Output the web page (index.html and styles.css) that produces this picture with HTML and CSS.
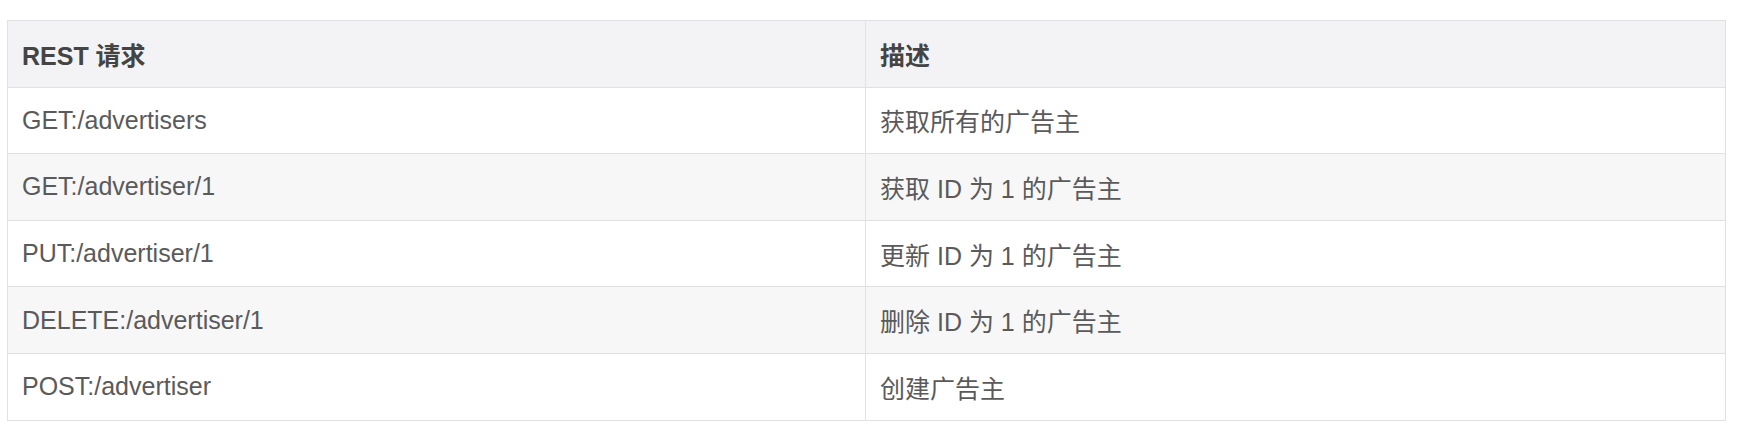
FILE: index.html
```html
<!DOCTYPE html>
<html lang="zh-CN">
<head>
    <meta charset="UTF-8">
    <meta name="viewport" content="width=device-width, initial-scale=1.0">
    <title>REST 请求</title>
    <link rel="stylesheet" href="styles.css">
</head>
<body>

<table class="rest-table">
    <thead>
        <tr>
            <th class="col-req">REST 请求</th>
            <th>描述</th>
        </tr>
    </thead>
    <tbody>
        <tr>
            <td>GET:/advertisers</td>
            <td>获取所有的广告主</td>
        </tr>
        <tr>
            <td>GET:/advertiser/1</td>
            <td>获取 ID 为 1 的广告主</td>
        </tr>
        <tr>
            <td>PUT:/advertiser/1</td>
            <td>更新 ID 为 1 的广告主</td>
        </tr>
        <tr>
            <td>DELETE:/advertiser/1</td>
            <td>删除 ID 为 1 的广告主</td>
        </tr>
        <tr>
            <td>POST:/advertiser</td>
            <td>创建广告主</td>
        </tr>
    </tbody>
</table>

</body>
</html>
```

FILE: styles.css
```css
html, body {
    margin: 0;
    padding: 0;
}
body {
    font-family: "Liberation Sans", "Noto Sans CJK SC", sans-serif;
    background-color: #fff;
    padding: 20px 18px 0 7px;
}
.rest-table {
    width: 1719px;
    border-collapse: collapse;
    border: 1px solid #e0e0e0;
    font-size: 25px;
    color: #5a5a5a;
}
.rest-table th,
.rest-table td {
    height: 66.6px;
    padding: 0 14px;
    text-align: left;
    border-top: 1px solid #e0e0e0;
    border-left: 1px solid #e2e2e2;
    box-sizing: border-box;
}
.rest-table th {
    background-color: #f3f3f5;
    color: #444;
    font-weight: bold;
}
.col-req {
    width: 858px;
}
.rest-table tbody tr:nth-child(even) td {
    background-color: #f7f7f8;
}
```
